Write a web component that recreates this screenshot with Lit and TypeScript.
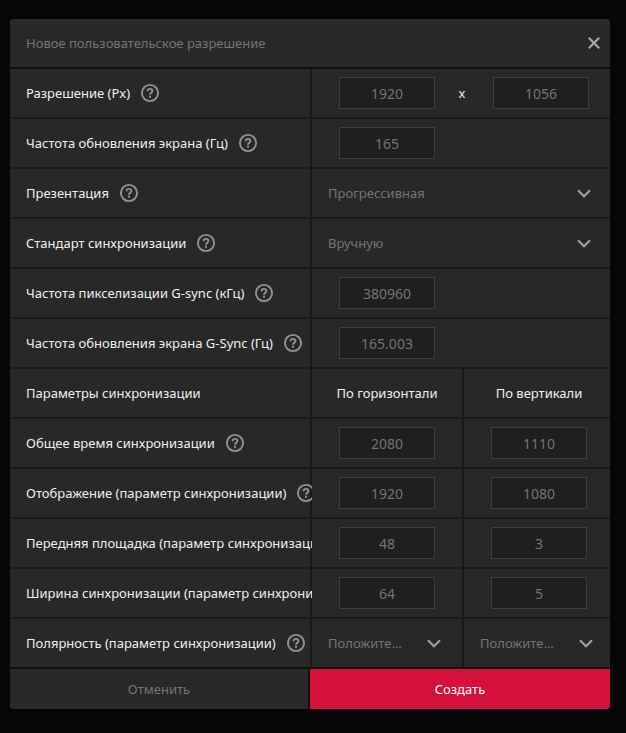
import { LitElement, html, css, svg, nothing } from "lit";
import { customElement, property } from "lit/decorators.js";

type Row = {
  id: string;
  label: string;
  kind: "pair" | "single" | "select" | "heading" | "double" | "doubleSelect";
  values: string[];
  help?: boolean;
};

const ROWS: Row[] = [
  { id: "resolution", label: "Разрешение (Px)", kind: "pair", values: ["1920", "1056"], help: true },
  { id: "refresh", label: "Частота обновления экрана (Гц)", kind: "single", values: ["165"], help: true },
  { id: "scan", label: "Презентация", kind: "select", values: ["Прогрессивная"], help: true },
  { id: "standard", label: "Стандарт синхронизации", kind: "select", values: ["Вручную"], help: true },
  { id: "pixel-clock", label: "Частота пикселизации G-sync (кГц)", kind: "single", values: ["380960"], help: true },
  { id: "gsync", label: "Частота обновления экрана G-Sync (Гц)", kind: "single", values: ["165.003"], help: true },
  { id: "params", label: "Параметры синхронизации", kind: "heading", values: ["По горизонтали", "По вертикали"] },
  { id: "total", label: "Общее время синхронизации", kind: "double", values: ["2080", "1110"], help: true },
  { id: "active", label: "Отображение (параметр синхронизации)", kind: "double", values: ["1920", "1080"], help: true },
  { id: "porch", label: "Передняя площадка (параметр синхронизации)", kind: "double", values: ["48", "3"], help: true },
  { id: "width", label: "Ширина синхронизации (параметр синхронизации)", kind: "double", values: ["64", "5"], help: true },
  { id: "polarity", label: "Полярность (параметр синхронизации)", kind: "doubleSelect", values: ["Положительная", "Положительная"], help: true },
];

const helpIcon = svg`<svg viewBox="0 0 20 20" width="20" height="20" fill="none" stroke="currentColor" aria-hidden="true">
  <circle cx="10" cy="10" r="8.1" stroke-width="1.9"></circle>
  <path d="M7.6 8.2C7.6 6.8 8.6 5.9 10 5.9S12.4 6.8 12.4 8.1C12.4 9.7 10 9.8 10 11.7" stroke-width="1.9"></path>
  <path d="M10 12.8V14.8" stroke-width="2"></path>
</svg>`;

const chevronIcon = svg`<svg viewBox="0 0 16 16" width="16" height="16" fill="none" stroke="currentColor" stroke-width="2.2" aria-hidden="true">
  <path d="M2 5.2L8 11.2L14 5.2"></path>
</svg>`;

const closeIcon = svg`<svg viewBox="0 0 16 16" width="16" height="16" fill="none" stroke="currentColor" stroke-width="2.1" aria-hidden="true">
  <path d="M2.8 2.8L13.2 13.2M13.2 2.8L2.8 13.2"></path>
</svg>`;

@customElement("setting-row")
class SettingRow extends LitElement {
  @property({ attribute: false }) row!: Row;

  static styles = css`
    :host {
      display: grid;
      grid-template-columns: 300fr 150fr 146fr;
      gap: 2px;
      min-height: 48px;
      background: #191919;
      color: #f0f0f0;
      font-size: 13px;
      line-height: 20px;
    }
    .cell {
      display: flex;
      align-items: center;
      min-width: 0;
      background: #282828;
    }
    .name {
      gap: 10px;
      padding-left: 16px;
      overflow: clip;
      overflow-clip-margin: 2px;
      white-space: nowrap;
    }
    .wide {
      grid-column: span 2;
    }
    .fields {
      padding-left: 27px;
    }
    .centered {
      justify-content: center;
    }
    .last {
      padding-left: 4px;
    }
    .times {
      width: 54px;
      margin-right: 4px;
      text-align: center;
    }
    .help {
      display: flex;
      flex: none;
      padding: 0;
      border: 0;
      background: none;
      color: #929292;
    }
    .field {
      box-sizing: border-box;
      width: 96px;
      height: 32px;
      padding: 0;
      border: 1px solid #3e3e3e;
      border-radius: 0;
      background: #1f1f1f;
      color: #757575;
      font: inherit;
      font-size: 14px;
      text-align: center;
    }
    .picker {
      display: grid;
      flex: 1;
      align-items: center;
      min-width: 0;
    }
    .select {
      grid-area: 1 / 1;
      min-width: 0;
      width: 100%;
      height: 48px;
      margin: 0;
      padding: 0 56px 0 16px;
      border: 0;
      appearance: none;
      background: none;
      color: #757575;
      font: inherit;
      text-overflow: ellipsis;
    }
    .chevron {
      display: flex;
      grid-area: 1 / 1;
      justify-self: end;
      margin-right: 18px;
      color: #a0a0a0;
      pointer-events: none;
    }
    .first .chevron {
      margin-right: 20px;
    }
    .second .select {
      padding-right: 52px;
    }
    .second .chevron {
      margin-right: 16px;
    }
  `;

  private field(index: number) {
    const { id, label, values } = this.row;
    return html`<input
      class="field"
      id=${`${id}-${index}`}
      type="text"
      inputmode="decimal"
      aria-label=${index ? `${label} 2` : nothing}
      .value=${values[index]}
    />`;
  }

  private picker(index: number) {
    const { id, label, values } = this.row;
    return html`<div class="picker">
      <select class="select" id=${`${id}-${index}`} aria-label=${index ? `${label} 2` : nothing}>
        <option>${values[index]}</option>
      </select>
      <span class="chevron">${chevronIcon}</span>
    </div>`;
  }

  private controls() {
    const { kind, values } = this.row;
    switch (kind) {
      case "pair":
        return html`<div class="cell wide fields">${this.field(0)}<span class="times">x</span>${this.field(1)}</div>`;
      case "single":
        return html`<div class="cell wide fields">${this.field(0)}</div>`;
      case "select":
        return html`<div class="cell wide">${this.picker(0)}</div>`;
      case "heading":
        return html`<div class="cell centered">${values[0]}</div>
          <div class="cell centered last">${values[1]}</div>`;
      case "double":
        return html`<div class="cell centered">${this.field(0)}</div>
          <div class="cell centered last">${this.field(1)}</div>`;
      case "doubleSelect":
        return html`<div class="cell first">${this.picker(0)}</div>
          <div class="cell second">${this.picker(1)}</div>`;
    }
  }

  render() {
    const { id, label, kind, help } = this.row;
    return html`<div class="cell name">
        ${kind === "heading"
          ? html`<span>${label}</span>`
          : html`<label for=${`${id}-0`}>${label}</label>`}
        ${help
          ? html`<button class="help" type="button" aria-label="Справка">${helpIcon}</button>`
          : nothing}
      </div>
      ${this.controls()}`;
  }
}

@customElement("app-root")
class AppRoot extends LitElement {
  static styles = css`
    :host {
      display: block;
      box-sizing: border-box;
      min-height: 100vh;
      padding: 19px 16px 24px 10px;
      background: #060606;
      font-family: "Noto Sans", "Open Sans", sans-serif;
    }
    .dialog {
      display: grid;
      gap: 2px;
      overflow: hidden;
      border-radius: 3px;
      background: #101010;
    }
    .rows {
      display: grid;
      gap: 2px;
      background: #191919;
    }
    .header {
      display: flex;
      align-items: center;
      justify-content: space-between;
      min-height: 48px;
      padding: 0 8px 0 16px;
      background: #282828;
      color: #757575;
    }
    .title {
      margin: 0;
      font-size: 13px;
      font-weight: 400;
      line-height: 20px;
    }
    .close {
      display: flex;
      padding: 0;
      border: 0;
      background: none;
      color: #a8a8a8;
    }
    .actions {
      display: grid;
      grid-template-columns: 298fr 300fr;
      gap: 2px;
    }
    .action {
      height: 40px;
      padding: 0;
      border: 0;
      background: #282828;
      color: #757575;
      font: inherit;
      font-size: 13px;
    }
    .primary {
      background: #d4103b;
      color: #ffffff;
    }
  `;

  render() {
    return html`<form class="dialog" @submit=${(e: Event) => e.preventDefault()}>
      <header class="header">
        <h1 class="title">Новое пользовательское разрешение</h1>
        <button class="close" type="button" aria-label="Закрыть">${closeIcon}</button>
      </header>
      <div class="rows">${ROWS.map((row) => html`<setting-row .row=${row}></setting-row>`)}</div>
      <footer class="actions">
        <button class="action" type="button">Отменить</button>
        <button class="action primary" type="submit">Создать</button>
      </footer>
    </form>`;
  }
}
